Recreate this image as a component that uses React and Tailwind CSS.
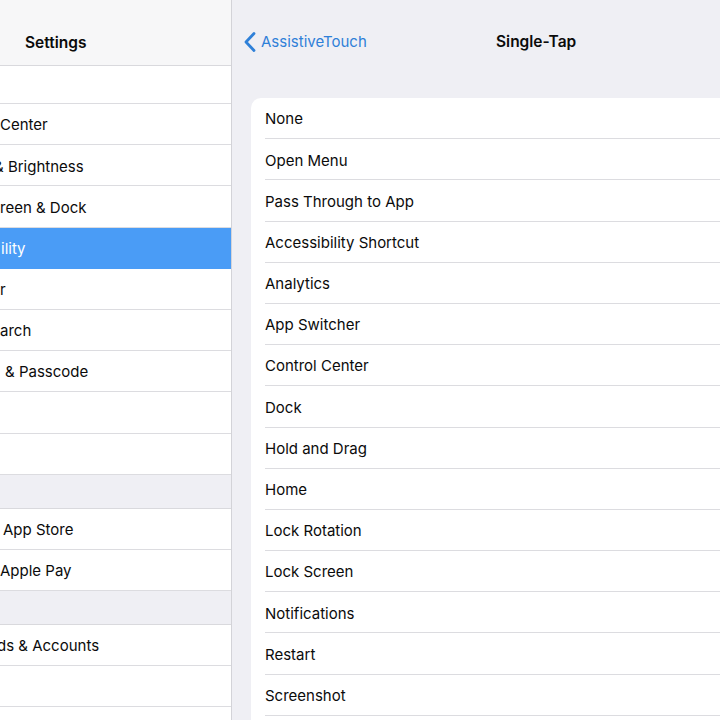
import React from "react";

const sideRows = [
  { t: "", h: "h-[38px]" },
  { t: "Center", pl: "pl-[0px]" },
  { t: "& Brightness", pl: "-ml-[6px]" },
  { t: "reen & Dock", pl: "pl-[0px]" },
  { t: "ility", pl: "pl-[1px]", sel: true },
  { t: "r", pl: "pl-[0px]" },
  { t: "arch", pl: "pl-[0px]" },
  { t: "& Passcode", pl: "pl-[5px]" },
  { t: "" },
  { t: "" },
  { gap: true },
  { t: "App Store", pl: "pl-[3px]" },
  { t: "Apple Pay", pl: "pl-[0px]" },
  { gap: true },
  { t: "ds & Accounts", pl: "-ml-[3px]" },
  { t: "" },
  { t: "" },
];

const items = [
  "None",
  "Open Menu",
  "Pass Through to App",
  "Accessibility Shortcut",
  "Analytics",
  "App Switcher",
  "Control Center",
  "Dock",
  "Hold and Drag",
  "Home",
  "Lock Rotation",
  "Lock Screen",
  "Notifications",
  "Restart",
  "Screenshot",
  "",
];

export default function App() {
  return (
    <div className="w-[720px] h-[720px] overflow-hidden flex bg-[#efeff4] font-['Inter','Liberation_Sans',sans-serif] text-[#0b0b0b]">
      <aside className="w-[232px] shrink-0 border-r border-[#d3d3d8] flex flex-col bg-[#efeff4]">
        <div className="h-[66px] shrink-0 bg-[#f7f7f8] border-b border-[#d9d9dd] flex items-center pt-[20px] pl-[25px]">
          <span className="text-[15.5px] font-semibold">Settings</span>
        </div>
        {sideRows.map((r, i) =>
          r.gap ? (
            <div key={i} className="h-[34px] shrink-0 border-b border-[#d9d9dd] bg-[#efeff4]" />
          ) : (
            <div
              key={i}
              className={`${r.h || "h-[41.2px]"} shrink-0 flex items-center pt-[3px] overflow-hidden whitespace-nowrap text-[15px] ${
                r.sel ? "bg-[#4a9cf6] text-white" : "bg-white border-b border-[#dcdce0]"
              }`}
            >
              <span className={r.pl}>{r.t}</span>
            </div>
          )
        )}
      </aside>
      <main className="flex-1 flex flex-col min-w-0">
        <div className="h-[84px] shrink-0 flex items-center pl-[12px]">
          <div className="w-[252px] flex items-center gap-[5px] text-[#2f80d8]">
            <svg width="12" height="20" viewBox="0 0 12 20" fill="none">
              <path d="M10 1.5 L2 10 L10 18.5" stroke="#2f80d8" strokeWidth="2.8" strokeLinecap="round" strokeLinejoin="round" />
            </svg>
            <span className="text-[15px]">AssistiveTouch</span>
          </div>
          <span className="text-[15.5px] font-semibold whitespace-nowrap">Single-Tap</span>
        </div>
        <div className="mt-[14px] ml-[19px] bg-white rounded-tl-[10px] flex flex-col">
          {items.map((it, i) => (
            <div key={i} className="h-[41.2px] shrink-0 pl-[14px]">
              <div className="h-full flex items-center pt-[3px] border-b border-[#dcdce0] text-[15px] whitespace-nowrap">
                {it}
              </div>
            </div>
          ))}
        </div>
      </main>
    </div>
  );
}
